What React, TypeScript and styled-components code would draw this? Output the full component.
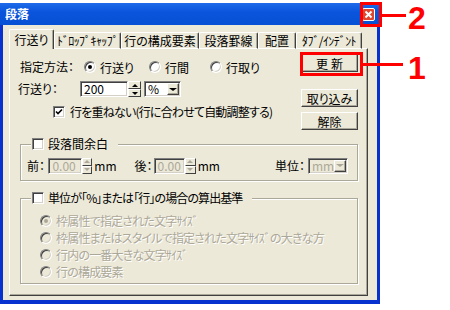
import React from 'react';
import styled, { createGlobalStyle } from 'styled-components';

const BG = '#ECE9D8';
const GRAY = '#ACA899';
const DARK = '#404040';

const GlobalStyle = createGlobalStyle`
  html, body {
    margin: 0;
    padding: 0;
    background: #fff;
  }
  body {
    font-family: "Noto Sans CJK JP", "Liberation Sans", sans-serif;
    font-size: 12px;
    font-feature-settings: "palt";
    color: #000;
  }
`;

const Page = styled.div`
  position: relative;
  width: 450px;
  height: 310px;
  padding-top: 3px;
  box-sizing: border-box;
`;

const Window = styled.div`
  width: 380px;
  height: 301px;
  box-sizing: border-box;
  border: 3px solid #0832D0;
  border-top: 0;
  border-bottom-width: 4px;
  background: ${BG};
  display: flex;
  flex-direction: column;
`;

const TitleBar = styled.div`
  height: 22px;
  margin: 0 -3px;
  padding: 0 5px 0 5px;
  display: flex;
  align-items: center;
  justify-content: space-between;
  background: linear-gradient(#1F6BEA, #0A55DC 40%, #0650D4);
`;

const Title = styled.span`
  color: #fff;
  font-weight: bold;
  font-size: 12px;
  line-height: 14px;
`;

const Client = styled.div`
  flex: 1;
  display: flex;
  flex-direction: column;
  padding: 5px 9px 4px 6px;
`;

const Tabs = styled.div`
  display: flex;
  align-items: flex-end;
  height: 19px;
  position: relative;
  z-index: 1;
  margin-bottom: -1px;
`;

const Tab = styled.div<{ $w: number; $active?: boolean; $narrow?: boolean }>`
  width: ${p => p.$w}px;
  height: ${p => (p.$active ? 20 : 17)}px;
  box-sizing: border-box;
  background: ${BG};
  border-top: 1px solid #fff;
  border-left: 1px solid #fff;
  border-right: 1px solid ${DARK};
  box-shadow: inset -1px 0 ${GRAY};
  border-radius: 2px 2px 0 0;
  display: flex;
  align-items: center;
  justify-content: center;
  padding-bottom: ${p => (p.$active ? 1 : 0)}px;
  letter-spacing: ${p => (p.$narrow ? '-0.6px' : '0')};
  white-space: nowrap;
  ${p => (p.$active ? '' : 'border-bottom: 1px solid #fff;')}
`;

const Panel = styled.div`
  flex: 1;
  box-sizing: border-box;
  border: 1px solid;
  border-color: #fff ${DARK} ${DARK} #fff;
  box-shadow: inset -1px -1px ${GRAY};
  padding: 5px 9px 0 8px;
`;

const TopSection = styled.div`
  display: flex;
  justify-content: space-between;
`;

const LeftCol = styled.div`
  padding-top: 3px;
  display: flex;
  flex-direction: column;
`;

const Row = styled.div<{ $h?: number; $mt?: number }>`
  display: flex;
  align-items: center;
  height: ${p => p.$h ?? 20}px;
  margin-top: ${p => p.$mt ?? 0}px;
`;

const Label = styled.span<{ $w?: number; $ml?: number; $disabled?: boolean; $tight?: boolean }>`
  ${p => (p.$w ? `width: ${p.$w}px;` : '')}
  margin-left: ${p => p.$ml ?? 0}px;
  white-space: nowrap;
  line-height: 14px;
  letter-spacing: ${p => (p.$tight ? '-0.8px' : '0')};
  color: ${p => (p.$disabled ? GRAY : '#000')};
  ${p => (p.$disabled ? 'text-shadow: 1px 1px #fff;' : '')}
`;

const Option = styled.label<{ $w?: number; $ml?: number; $gap?: number }>`
  display: flex;
  align-items: center;
  gap: ${p => p.$gap ?? 4}px;
  ${p => (p.$w ? `width: ${p.$w}px;` : '')}
  margin-left: ${p => p.$ml ?? 0}px;
  white-space: nowrap;
`;

const RadioCircle = styled.span<{ $checked?: boolean; $disabled?: boolean }>`
  width: 12px;
  height: 12px;
  flex-shrink: 0;
  box-sizing: border-box;
  border-radius: 50%;
  border: 1px solid;
  border-color: #808080 #fff #fff #808080;
  box-shadow: inset 1px 1px ${DARK}, inset -1px -1px #D4D0C8;
  background: ${p => (p.$disabled ? BG : '#fff')};
  display: flex;
  align-items: center;
  justify-content: center;
  &::after {
    content: '';
    display: ${p => (p.$checked ? 'block' : 'none')};
    width: 4px;
    height: 4px;
    border-radius: 50%;
    background: ${p => (p.$disabled ? GRAY : '#000')};
  }
`;

const CheckBox = styled.span`
  width: 12px;
  height: 12px;
  flex-shrink: 0;
  box-sizing: border-box;
  border: 1px solid;
  border-color: #808080 #fff #fff #808080;
  box-shadow: inset 1px 1px ${DARK}, inset -1px -1px #D4D0C8;
  background: #fff;
  display: flex;
  align-items: center;
  justify-content: center;
`;

const Edit = styled.div<{ $w: number; $disabled?: boolean; $ml?: number }>`
  width: ${p => p.$w}px;
  height: 16px;
  margin-left: ${p => p.$ml ?? 0}px;
  box-sizing: border-box;
  border: 1px solid;
  border-color: #808080 #fff #fff #808080;
  box-shadow: inset 1px 1px ${DARK}, inset -1px -1px #D4D0C8;
  background: ${p => (p.$disabled ? BG : '#fff')};
  color: ${p => (p.$disabled ? GRAY : '#000')};
  padding: 0 1px 0 3px;
  line-height: 14px;
  display: flex;
  align-items: center;
  justify-content: space-between;
`;

const Spin = styled.div`
  width: 13px;
  height: 16px;
  display: flex;
  flex-direction: column;
`;

const SpinBtn = styled.div`
  flex: 1;
  box-sizing: border-box;
  background: ${BG};
  border: 1px solid;
  border-color: #fff ${DARK} ${DARK} #fff;
  display: flex;
  align-items: center;
  justify-content: center;
`;

const Arrow = styled.span<{ $down?: boolean; $disabled?: boolean; $size: number }>`
  width: 0;
  height: 0;
  border-left: ${p => p.$size}px solid transparent;
  border-right: ${p => p.$size}px solid transparent;
  ${p => (p.$down ? 'border-top' : 'border-bottom')}: ${p => Math.ceil(p.$size / 1.4)}px solid ${p => (p.$disabled ? GRAY : '#000')};
`;

const DropBtn = styled.div`
  width: 12px;
  height: 12px;
  box-sizing: border-box;
  background: ${BG};
  border: 1px solid;
  border-color: #fff ${DARK} ${DARK} #fff;
  box-shadow: inset -1px -1px ${GRAY};
  display: flex;
  align-items: center;
  justify-content: center;
`;

const RightCol = styled.div`
  display: flex;
  flex-direction: column;
`;

const Button = styled.div<{ $mt?: number; $spaced?: boolean }>`
  width: 57px;
  height: 18px;
  margin-top: ${p => p.$mt ?? 0}px;
  box-sizing: border-box;
  background: ${BG};
  border: 1px solid;
  border-color: #fff ${DARK} ${DARK} #fff;
  box-shadow: inset -1px -1px ${GRAY};
  display: flex;
  align-items: center;
  justify-content: center;
  letter-spacing: ${p => (p.$spaced ? '3px' : '0')};
  padding-left: ${p => (p.$spaced ? '3px' : '0')};
`;

const Group = styled.fieldset<{ $mt: number }>`
  margin: ${p => p.$mt}px 0 0 2px;
  padding: 0;
  border: 1px solid ${GRAY};
  box-shadow: inset 1px 1px #fff, 1px 1px #fff;
  min-width: 0;
`;

const Legend = styled.legend<{ $tight?: boolean }>`
  margin-left: 10px;
  padding: 0 10px 0 1px;
  height: 12px;
  display: flex;
  align-items: center;
  gap: 4px;
  background: ${BG};
  line-height: 12px;
  white-space: nowrap;
  letter-spacing: ${p => (p.$tight ? '-0.9px' : '0')};
`;

const GroupBody = styled.div<{ $pt: number; $pb: number; $pl: number }>`
  padding: ${p => p.$pt}px 9px ${p => p.$pb}px ${p => p.$pl}px;
`;

const CalloutBox = styled.div<{ $x: number; $y: number; $w: number; $h: number }>`
  position: absolute;
  left: ${p => p.$x}px;
  top: ${p => p.$y}px;
  width: ${p => p.$w}px;
  height: ${p => p.$h}px;
  box-sizing: border-box;
  border: 3px solid #F00;
`;

const CalloutLine = styled.div<{ $x: number; $y: number; $w: number }>`
  position: absolute;
  left: ${p => p.$x}px;
  top: ${p => p.$y}px;
  width: ${p => p.$w}px;
  height: 3px;
  background: #F00;
`;

const CalloutNum = styled.div<{ $x: number; $y: number }>`
  position: absolute;
  left: ${p => p.$x}px;
  top: ${p => p.$y}px;
  color: #F00;
  font-family: "Liberation Sans", Arial, sans-serif;
  font-weight: bold;
  font-size: 32px;
  line-height: normal;
`;

const CloseIcon = () => (
  <svg width="13" height="13" viewBox="0 0 13 13">
    <rect x="0.5" y="0.5" width="12" height="12" rx="1.5" fill="#E0452E" stroke="#fff" />
    <path d="M3.5 3.5 L9.5 9.5 M9.5 3.5 L3.5 9.5" stroke="#fff" strokeWidth="2" />
  </svg>
);

const CheckMark = () => (
  <svg width="8" height="8" viewBox="0 0 8 8">
    <path d="M1 3.5 L3 5.5 L7 1.5" fill="none" stroke="#000" strokeWidth="1.6" />
  </svg>
);

const SpinBox = ({ w, value, disabled }: { w: number; value: string; disabled?: boolean }) => (
  <>
    <Edit $w={w} $disabled={disabled}>{value}</Edit>
    <Spin>
      <SpinBtn><Arrow $disabled={disabled} $size={3} /></SpinBtn>
      <SpinBtn><Arrow $down $disabled={disabled} $size={3} /></SpinBtn>
    </Spin>
  </>
);

const Select = ({ w, value, disabled, ml }: { w: number; value: string; disabled?: boolean; ml: number }) => (
  <Edit $w={w} $disabled={disabled} $ml={ml}>
    {value}
    <DropBtn><Arrow $down $disabled={disabled} $size={4} /></DropBtn>
  </Edit>
);

const tabs = [
  { name: '行送り', w: 45 },
  { name: 'ﾄﾞﾛｯﾌﾟｷｬｯﾌﾟ', w: 67, narrow: true },
  { name: '行の構成要素', w: 78 },
  { name: '段落罫線', w: 59 },
  { name: '配置', w: 38 },
  { name: 'ﾀﾌﾞ/ｲﾝﾃﾞﾝﾄ', w: 66, narrow: true },
];

const bases = [
  '枠属性で指定された文字ｻｲｽﾞ',
  '枠属性またはスタイルで指定された文字ｻｲｽﾞの大きな方',
  '行内の一番大きな文字ｻｲｽﾞ',
  '行の構成要素',
];

export default function App() {
  return (
    <Page>
      <GlobalStyle />
      <Window>
        <TitleBar>
          <Title>段落</Title>
          <CloseIcon />
        </TitleBar>
        <Client>
          <Tabs>
            {tabs.map((t, i) => (
              <Tab key={t.name} $w={t.w} $active={i === 0} $narrow={t.narrow}>{t.name}</Tab>
            ))}
          </Tabs>
          <Panel>
            <TopSection>
              <LeftCol>
                <Row>
                  <Label $w={64} $ml={2}>指定方法：</Label>
                  <Option $w={65}><RadioCircle $checked />行送り</Option>
                  <Option $w={61}><RadioCircle />行間</Option>
                  <Option><RadioCircle />行取り</Option>
                </Row>
                <Row $mt={2}>
                  <Label $w={62}>行送り：</Label>
                  <SpinBox w={48} value="200" />
                  <Select w={37} value="%" ml={3} />
                </Row>
                <Row $mt={3}>
                  <Option $ml={35} $gap={5}>
                    <CheckBox><CheckMark /></CheckBox>
                    <Label $tight>行を重ねない(行に合わせて自動調整する)</Label>
                  </Option>
                </Row>
              </LeftCol>
              <RightCol>
                <Button $spaced>更新</Button>
                <Button $mt={17}>取り込み</Button>
                <Button $mt={5}>解除</Button>
              </RightCol>
            </TopSection>

            <Group $mt={8}>
              <Legend><CheckBox />段落間余白</Legend>
              <GroupBody $pt={7} $pb={6} $pl={6}>
                <Row $h={17}>
                  <Label $w={26}>前：</Label>
                  <SpinBox w={39} value="0.00" disabled />
                  <Label $ml={2}>mm</Label>
                  <Label $w={23} $ml={18}>後：</Label>
                  <SpinBox w={37} value="0.00" disabled />
                  <Label $ml={2}>mm</Label>
                  <Label $ml={55}>単位：</Label>
                  <Select w={40} value="mm" disabled ml={3} />
                </Row>
              </GroupBody>
            </Group>

            <Group $mt={11}>
              <Legend $tight><CheckBox />単位が「%」または「行」の場合の算出基準</Legend>
              <GroupBody $pt={8} $pb={3} $pl={19}>
                {bases.map((b, i) => (
                  <Row key={b} $h={17}>
                    <Option>
                      <RadioCircle $checked={i === 0} $disabled />
                      <Label $disabled $tight>{b}</Label>
                    </Option>
                  </Row>
                ))}
              </GroupBody>
            </Group>
          </Panel>
        </Client>
      </Window>

      <CalloutBox $x={360} $y={2} $w={22} $h={25} />
      <CalloutLine $x={382} $y={14} $w={24} />
      <CalloutNum $x={408} $y={0}>2</CalloutNum>

      <CalloutBox $x={300} $y={52} $w={63} $h={24} />
      <CalloutLine $x={363} $y={63} $w={40} />
      <CalloutNum $x={408} $y={50}>1</CalloutNum>
    </Page>
  );
}
